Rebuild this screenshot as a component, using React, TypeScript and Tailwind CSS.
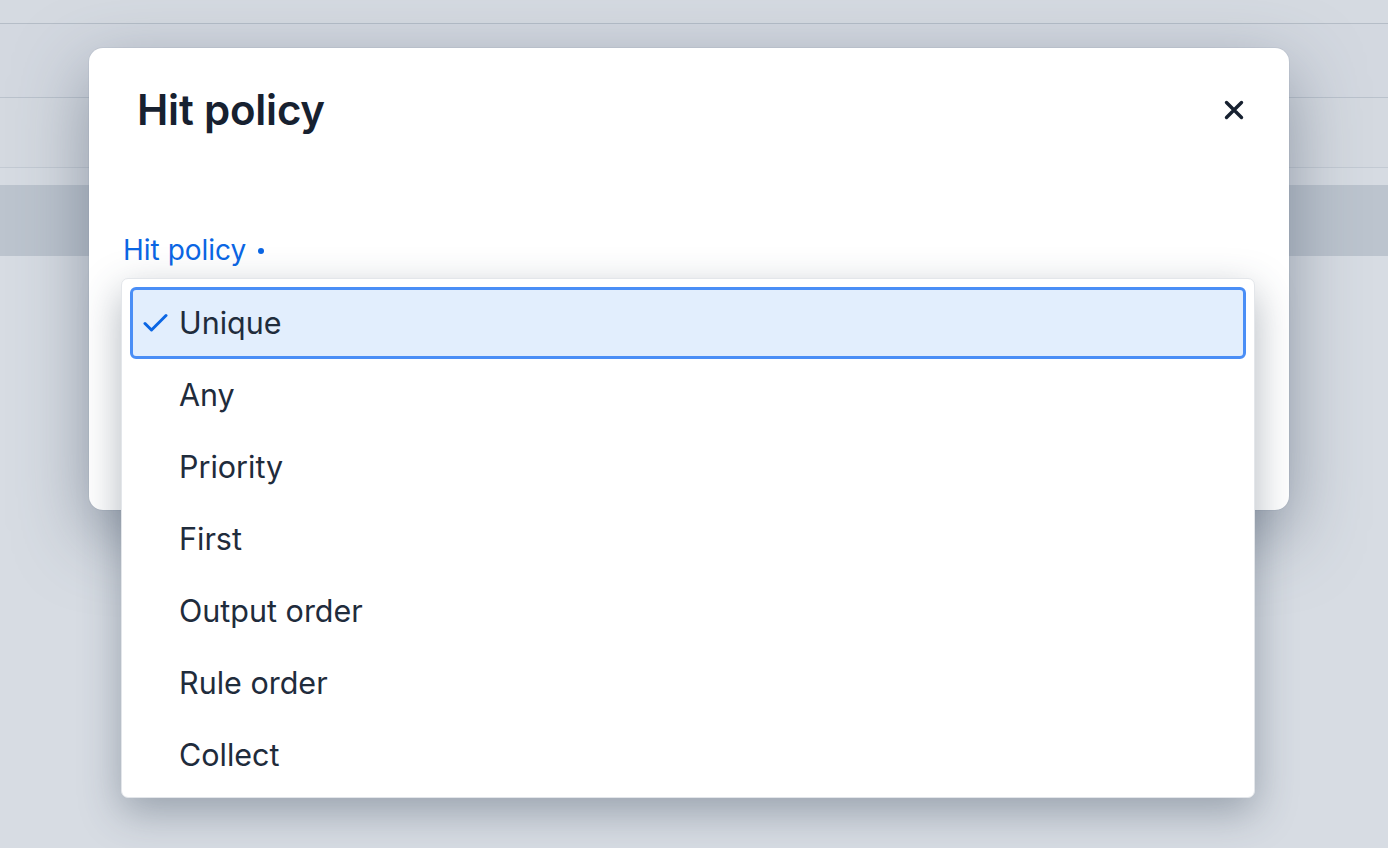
import React from "react";

const items = ["Unique", "Any", "Priority", "First", "Output order", "Rule order", "Collect"];

export default function App() {
  return (
    <div
      className="relative w-[1388px] h-[848px] overflow-hidden bg-[#d7dce3]"
      style={{ fontFamily: "Inter, 'Noto Sans', sans-serif" }}
    >
      {/* background page (dimmed) */}
      <div className="flex flex-col">
        <div className="h-[24px] bg-[#d5dae1] border-b border-[#b5bdc7]" />
        <div className="h-[74px] bg-[#d3d8e0] border-b border-[#bac2cc]" />
        <div className="h-[70px] bg-[#d4d9e0] border-b border-[#c3cad3]" />
        <div className="h-[17px] bg-[#d6dbe2]" />
        <div className="h-[71px] bg-[#bcc4ce]" />
        <div className="flex-1 bg-[#d7dce3]" />
      </div>

      {/* modal */}
      <div className="absolute left-[89px] top-[48px] w-[1200px] h-[462px] bg-white rounded-[14px] shadow-[0_24px_70px_rgba(71,85,105,0.5),0_0_0_1px_rgba(148,163,184,0.15)]">
        <div className="flex items-start justify-between pl-[48px] pr-[45px] pt-[36px]">
          <h1 className="text-[42px] leading-[52px] font-semibold text-[#172130] tracking-[-0.2px]">Hit policy</h1>
          <button className="mt-[16px] w-[20px] h-[20px] flex items-center justify-center">
            <svg width="20" height="20" viewBox="0 0 20 20" fill="none">
              <path d="M2.5 2.5 L17.5 17.5 M17.5 2.5 L2.5 17.5" stroke="#172130" strokeWidth="3.4" strokeLinecap="round" />
            </svg>
          </button>
        </div>
        <div className="pl-[34px] mt-[97px] flex items-center gap-[12px]">
          <span className="text-[28px] leading-[34px] text-[#0b66e4]">Hit policy</span>
          <span className="w-[6px] h-[6px] rounded-full bg-[#0b66e4] mt-[2px]" />
        </div>
      </div>

      {/* dropdown */}
      <div className="absolute left-[121px] top-[278px] w-[1134px] h-[520px] bg-white rounded-[7px] border border-[#e3e6ea] shadow-[0_14px_40px_rgba(51,65,85,0.38)] p-[8px]">
        <ul className="flex flex-col">
          {items.map((it, i) => {
            const sel = i === 0;
            return (
              <li
                key={it}
                className={
                  sel
                    ? "h-[72px] flex items-center rounded-[6px] border-[3px] border-[#4a8ef6] bg-[#e2eefd]"
                    : "h-[72px] flex items-center border-[3px] border-transparent"
                }
              >
                <span className="w-[46px] pl-[10px] flex items-center">
                  {sel && (
                    <svg width="25" height="20" viewBox="0 0 25 20" fill="none">
                      <path d="M2 10.5 L8.5 17 L23 2.5" stroke="#0b66e4" strokeWidth="3" strokeLinecap="round" strokeLinejoin="round" />
                    </svg>
                  )}
                </span>
                <span className="text-[30.5px] leading-[36px] text-[#1f2c3c]">{it}</span>
              </li>
            );
          })}
        </ul>
      </div>
    </div>
  );
}
